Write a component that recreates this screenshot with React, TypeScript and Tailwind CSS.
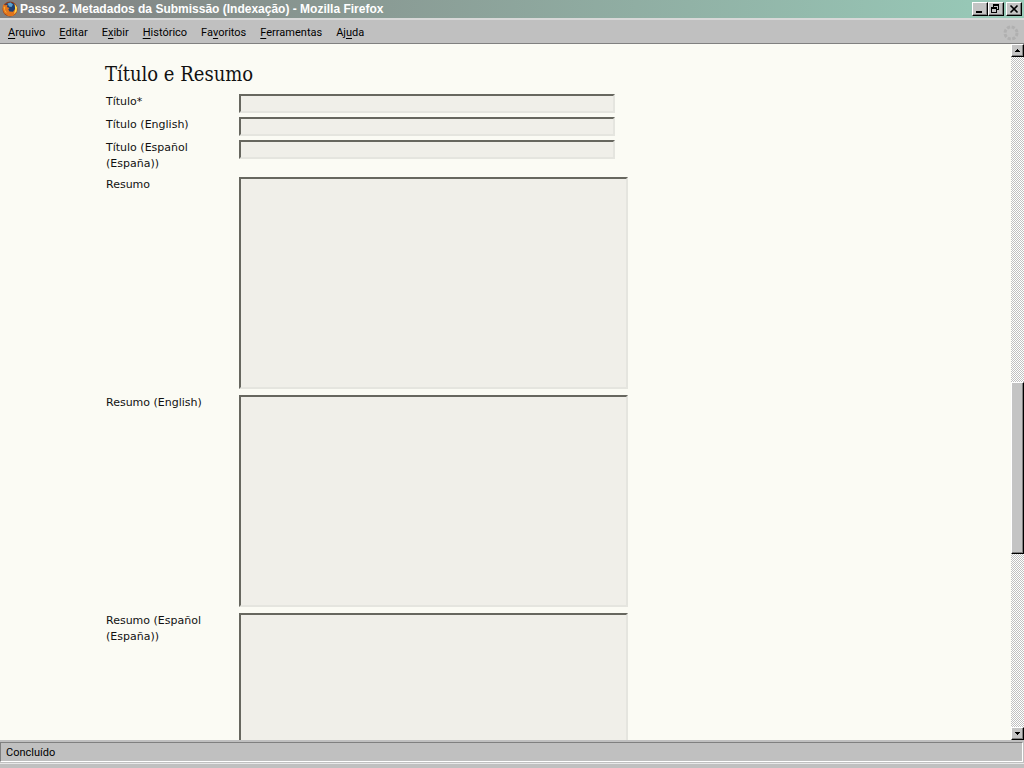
import React from 'react';

const raised = 'bg-[#c4c4c4] border border-t-white border-l-white border-b-black border-r-black shadow-[inset_-1px_-1px_0_#808080]';

const menuItems = [
  { before: '', key: 'A', after: 'rquivo' },
  { before: '', key: 'E', after: 'ditar' },
  { before: 'E', key: 'x', after: 'ibir' },
  { before: '', key: 'H', after: 'istórico' },
  { before: 'Fa', key: 'v', after: 'oritos' },
  { before: '', key: 'F', after: 'erramentas' },
  { before: 'Aj', key: 'u', after: 'da' },
];

const fields = [
  { id: 'title', label: 'Título*', multiline: false },
  { id: 'title-en', label: 'Título (English)', multiline: false },
  { id: 'title-es', label: 'Título (Español (España))', multiline: false },
  { id: 'abstract', label: 'Resumo', multiline: true },
  { id: 'abstract-en', label: 'Resumo (English)', multiline: true },
  { id: 'abstract-es', label: 'Resumo (Español (España))', multiline: true },
];

const FirefoxIcon: React.FC = () => (
  <svg width="16" height="16" viewBox="0 0 16 16" aria-hidden="true">
    <circle cx="8" cy="8" r="7.5" fill="#8f3d1c" />
    <circle cx="8" cy="7" r="5.6" fill="#1d3f73" />
    <path d="M5.5 2.5 8.5 1.6 11 3.6 9.5 6 7 5.5Z" fill="#5ba3cf" />
    <path d="M1 3.5 3 4.3 5.5 3.8 5 6 7.5 7 6.3 8.5 7.5 10.5 11 10.8 13 8 13.4 4 15.2 7 14.5 11.5 11 15 6 15 2 12 .6 8Z" fill="#e2751c" />
    <path d="M12.6 2.4 15 6.5 14.5 10.5 12 13 13.2 8.5Z" fill="#ffdc4e" />
    <path d="M1.6 6 3.2 5.5 3 9 5 12 3 11Z" fill="#f8ad36" />
  </svg>
);

const TitleBar: React.FC = () => (
  <header className="flex h-[18px] shrink-0 items-center bg-linear-to-r from-[#808080] to-[#98cbb9] px-[2px]">
    <FirefoxIcon />
    <h1 className="ml-[2px] grow truncate font-['Liberation_Sans',sans-serif] text-xs font-bold text-white">
      Passo 2. Metadados da Submissão (Indexação) - Mozilla Firefox
    </h1>
    <button type="button" aria-label="Minimizar" className={`h-[14px] w-4 ${raised}`}>
      <svg width="14" height="12" viewBox="0 0 14 12" shapeRendering="crispEdges">
        <path d="M3 8h6v2H3z" />
      </svg>
    </button>
    <button type="button" aria-label="Restaurar" className={`h-[14px] w-4 ${raised}`}>
      <svg width="14" height="12" viewBox="0 0 14 12" shapeRendering="crispEdges">
        <path d="M4 1h6v6H8V6h1V3H5v1H4zM2 4h6v6H2zM3 6v3h4V6z" fillRule="evenodd" />
      </svg>
    </button>
    <button type="button" aria-label="Fechar" className={`ml-[2px] h-[14px] w-4 ${raised}`}>
      <svg width="14" height="12" viewBox="0 0 14 12">
        <path d="m3.5 2.5 7 7m0-7-7 7" stroke="#000" strokeWidth="1.6" />
      </svg>
    </button>
  </header>
);

const MenuBar: React.FC = () => (
  <nav className="flex h-[26px] shrink-0 items-center gap-[14px] border-t-2 border-b border-t-[#d8d8d8] border-b-[#808080] pt-[2px] pr-[5px] pl-2 font-[Roboto,sans-serif] text-[11px] leading-4">
    {menuItems.map(item => (
      <button key={item.key + item.after} type="button">
        {item.before}
        <span className="underline underline-offset-2">{item.key}</span>
        {item.after}
      </button>
    ))}
    <svg className="ml-auto" width="16" height="16" viewBox="0 0 16 16" aria-hidden="true">
      <circle cx="8" cy="8" r="6" fill="none" stroke="#b0b0b0" strokeWidth="3" strokeDasharray="3.2 1.5" />
    </svg>
  </nav>
);

const inset = 'border-2 border-t-[#67675f] border-l-[#67675f] border-r-[#e5e5df] border-b-[#e5e5df] bg-[#f0efe9] outline-none';

const SubmissionForm: React.FC = () => (
  <main className="min-w-0 grow overflow-hidden pt-5 pl-[105px]">
    <h2 className="font-['DejaVu_Serif_Condensed','DejaVu_Serif',serif] text-xl leading-5 text-[#111]">Título e Resumo</h2>
    <form className="mt-[10px] ml-px flex flex-col gap-1">
      {fields.map(field => (
        <div key={field.id} className="flex items-start">
          <label htmlFor={field.id} className="w-[133px] shrink-0 pr-5 pb-px font-['DejaVu_Sans',sans-serif] text-[11px] leading-4 text-[#111]">
            {field.label}
          </label>
          {field.multiline ? (
            <textarea id={field.id} className={`mb-[2px] block h-[212px] w-full max-w-[389px] resize-none ${inset}`} />
          ) : (
            <input id={field.id} type="text" className={`h-[19px] w-full max-w-[376px] ${inset}`} />
          )}
        </div>
      ))}
    </form>
  </main>
);

const ScrollBar: React.FC = () => (
  <div className="flex w-[13px] shrink-0 flex-col bg-[repeating-conic-gradient(#c0c0c0_0_25%,#fff_0_50%)] bg-size-[2px_2px]">
    <button type="button" aria-label="Rolar para cima" className={`flex h-[13px] shrink-0 items-center justify-center ${raised}`}>
      <svg width="5" height="3" viewBox="0 0 5 3" shapeRendering="crispEdges">
        <path d="M2 0h1v1h1v1h1v1H0V2h1V1h1z" />
      </svg>
    </button>
    <div className="grow-[325]" />
    <div className={`grow-[170] ${raised}`} />
    <div className="grow-[173]" />
    <button type="button" aria-label="Rolar para baixo" className={`flex h-[13px] shrink-0 items-center justify-center ${raised}`}>
      <svg width="5" height="3" viewBox="0 0 5 3" shapeRendering="crispEdges">
        <path d="M0 0h5v1H4v1H3v1H2V2H1V1H0z" />
      </svg>
    </button>
  </div>
);

const App: React.FC = () => (
  <div className="flex h-screen flex-col overflow-hidden bg-[#c0c0c0] text-black">
    <TitleBar />
    <MenuBar />
    <div className="flex min-h-0 grow bg-[#fbfbf4]">
      <SubmissionForm />
      <ScrollBar />
    </div>
    <footer className="shrink-0 pt-[2px] font-[Roboto,sans-serif] text-[11px]">
      <p className="mr-px h-5 border border-t-[#808080] border-r-white border-b-white border-l-[#808080] pl-[5px] leading-5">Concluído</p>
      <div className="mt-px h-[5px] border-t border-t-[#e8e8e8]" />
    </footer>
  </div>
);

export default App;
